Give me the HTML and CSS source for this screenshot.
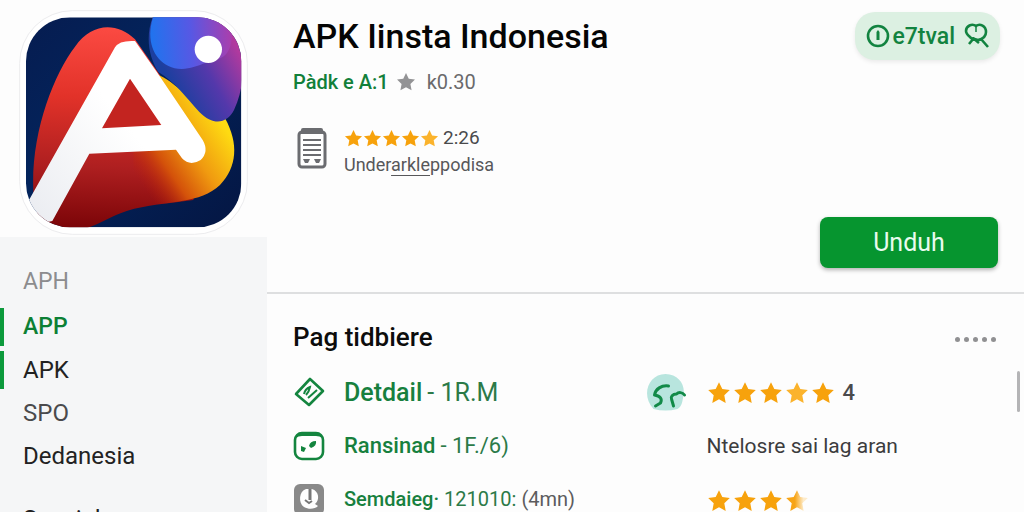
FILE: index.html
```html
<!DOCTYPE html>
<html lang="id">
<head>
  <meta charset="UTF-8">
  <meta name="viewport" content="width=device-width, initial-scale=1.0">
  <title>APK Iinsta Indonesia</title>
  <link rel="stylesheet" href="styles.css">
</head>
<body>
  <!-- Shared shapes -->
  <svg class="defs" aria-hidden="true">
    <defs>
      <linearGradient id="half">
        <stop offset="0.4" stop-color="#f7a416"/>
        <stop offset="0.8" stop-color="#fdebca"/>
      </linearGradient>
      <symbol id="star" viewBox="0 0 24 24">
        <path d="M12 1.2l3.3 6.9 7.5 1-5.5 5.2 1.4 7.6L12 18.2l-6.7 3.7 1.4-7.6L1.2 9.1l7.5-1z"/>
      </symbol>
    </defs>
  </svg>

  <div class="page">
    <aside class="side">
      <div class="logo">
        <svg viewBox="57 30 687 675" role="img" aria-label="APK Iinsta">
          <defs>
            <linearGradient id="navy" x1="0" y1="0" x2="1" y2="1">
              <stop offset="0" stop-color="#061c50"/>
              <stop offset="0.4" stop-color="#03245c"/>
              <stop offset="1" stop-color="#041643"/>
            </linearGradient>
            <linearGradient id="red" gradientUnits="userSpaceOnUse" x1="260" y1="80" x2="240" y2="680">
              <stop offset="0" stop-color="#fb4a42"/>
              <stop offset="0.35" stop-color="#e23229"/>
              <stop offset="0.7" stop-color="#ae1f20"/>
              <stop offset="1" stop-color="#7c0508"/>
            </linearGradient>
            <linearGradient id="gold" gradientUnits="userSpaceOnUse" x1="430" y1="560" x2="680" y2="390">
              <stop offset="0" stop-color="#b81c08" stop-opacity="0"/>
              <stop offset="0.3" stop-color="#d4520a"/>
              <stop offset="0.6" stop-color="#f09a10"/>
              <stop offset="1" stop-color="#fedb12"/>
            </linearGradient>
            <linearGradient id="violet" gradientUnits="userSpaceOnUse" x1="520" y1="260" x2="715" y2="150">
              <stop offset="0" stop-color="#1c3f9f"/>
              <stop offset="0.5" stop-color="#5438ab"/>
              <stop offset="1" stop-color="#b23a9e"/>
            </linearGradient>
            <linearGradient id="sky" gradientUnits="userSpaceOnUse" x1="455" y1="110" x2="690" y2="90">
              <stop offset="0" stop-color="#2173ee"/>
              <stop offset="0.5" stop-color="#5758e4"/>
              <stop offset="1" stop-color="#a83fae"/>
            </linearGradient>
            <linearGradient id="letter" x1="0.6" y1="0.5" x2="0" y2="1">
              <stop offset="0" stop-color="#fff"/>
              <stop offset="1" stop-color="#e9ebf0"/>
            </linearGradient>
            <clipPath id="tile"><rect x="78" y="52" width="646" height="630" rx="132"/></clipPath>
          </defs>
          <rect x="59" y="32" width="683" height="671" rx="158" fill="#fff" stroke="#ececee" stroke-width="3"/>
          <g clip-path="url(#tile)">
            <rect x="78" y="52" width="646" height="630" fill="url(#navy)"/>
            <path fill="url(#red)" d="M100 575C92 400 160 225 225 140C275 68 350 65 405 118L480 226L600 500L580 600C500 612 440 614 380 633C330 650 300 672 250 688H120z"/>
            <path fill="url(#gold)" d="M400 450H500L478 226C540 255 590 330 676 356C716 430 712 500 660 555C600 612 510 600 400 628z"/>
            <path fill="#c32420" d="M390 226L296 395H494z"/>
            <path fill="url(#violet)" d="M458 52C436 110 446 170 475 216C525 245 560 295 598 336C640 378 680 372 702 330C716 300 724 270 726 240V50z"/>
            <path fill="url(#sky)" d="M460 50C432 130 470 205 545 207C600 204 622 180 660 175C690 165 705 120 690 50z"/>
            <path fill="url(#letter)" fill-rule="evenodd" d="M345 142Q358 120 405 123L470 215L608 420Q628 455 602 480Q570 500 546 475L528 449L268 461L157 663L80 680V610L90 595zM390 236L306 385L484 375z"/>
            <circle cx="625" cy="148" r="41" fill="#fff"/>
          </g>
        </svg>
      </div>
      <nav class="menu">
        <h2>APH</h2>
        <a class="active" href="#app">APP</a>
        <a class="marked" href="#apk">APK</a>
        <a class="muted" href="#spo">SPO</a>
        <a href="#dedanesia">Dedanesia</a>
        <a class="next" href="#spesial">Spesial</a>
      </nav>
    </aside>

    <main class="main">
      <header class="app">
        <div class="app-info">
          <h1>APK Iinsta Indonesia</h1>
          <p class="author">
            <a href="#author">Pàdk e A:1</a>
            <svg class="star grey"><use href="#star"/></svg>
            <span>k0.30</span>
          </p>
          <div class="rating">
            <svg class="doc" viewBox="0 0 30 42" aria-hidden="true">
              <rect x="2" y="5" width="26" height="35" rx="3" fill="#fff" stroke="#6b6c70" stroke-width="3"/>
              <path fill="#6b6c70" d="M4 7V3q0-2 2-2h18q2 0 2 2v4z"/>
              <path stroke="#6b6c70" stroke-width="2" d="M6 13h18M6 18h18M6 23h18M6 28h18"/>
              <path fill="#6b6c70" d="M6 32h7l-2 4H8zM17 32h7l-2 4h-3z"/>
            </svg>
            <div>
              <div class="stars small">
                <svg class="star"><use href="#star"/></svg>
                <svg class="star"><use href="#star"/></svg>
                <svg class="star"><use href="#star"/></svg>
                <svg class="star"><use href="#star"/></svg>
                <svg class="star light"><use href="#star"/></svg>
                <span>2:26</span>
              </div>
              <p class="note">Under<u>arkle</u>ppodisa</p>
            </div>
          </div>
        </div>
        <div class="app-actions">
          <button class="chip" type="button">
            <svg class="chip-mark" viewBox="0 0 24 24" aria-hidden="true">
              <circle cx="12" cy="12" r="10" fill="none" stroke="#128340" stroke-width="2.6"/>
              <path fill="#128340" d="M10.500 8l1.500-2 1.500 2v8h-3z"/>
            </svg>
            <span>e7tval</span>
            <svg class="chip-search" viewBox="0 0 26 26" fill="none" stroke="#128340" stroke-width="2.600" aria-hidden="true">
              <path d="M13 3C9 0 3 3 3 8c0 3 3 5 5 7l7 2c5-1 8-4 8-8 0-6-6-9-10-6zM18 16l7 8M6 21l5-6M10 15l6 5"/>
              <path stroke-width="1.500" d="M13 3v6"/>
            </svg>
          </button>
          <button class="download" type="button">Unduh</button>
        </div>
      </header>

      <section class="details">
        <div class="details-head">
          <h2>Pag tidbiere</h2>
          <button class="more" type="button" aria-label="Lainnya"><i></i><i></i><i></i><i></i><i></i></button>
        </div>
        <div class="columns">
          <ul class="list">
            <li class="big">
              <svg viewBox="0 0 32 32" fill="none" stroke="#14853f" aria-hidden="true">
                <path stroke-width="2.6" stroke-linejoin="round" d="M17 2l13 12-14 14L3 17z"/>
                <path stroke-width="2" d="M11 17q1-5 6-7-1 5-4 8M15 21l9-8"/>
              </svg>
              <a href="#detdail">Detdail</a><span>- 1R.M</span>
            </li>
            <li>
              <svg viewBox="0 0 32 32" aria-hidden="true">
                <rect x="2" y="3" width="28" height="26" rx="7" fill="#fff" stroke="#14853f" stroke-width="2.6"/>
                <path fill="#14853f" d="M3 8q2-6 7-6h12q5 0 7 6-2-2-6-2H9q-4 0-6 2z"/>
                <path fill="#14853f" d="M8 16l5 2-2 4-3-1zM16 16q1-5 7-5 1 5-5 7z"/>
              </svg>
              <a href="#ransinad">Ransinad</a><span>- 1F./6)</span>
            </li>
            <li class="small">
              <svg viewBox="0 0 32 32" aria-hidden="true">
                <rect x="1" y="1" width="30" height="31" rx="6" fill="#898989"/>
                <path fill="#fff" d="M13 6C6 8 5 20 11 24c5 3 11 2 14-1l-3-2c5-4 4-13-3-15z"/>
                <path stroke="#777" stroke-width="3" fill="none" d="M17 6v11"/>
                <path stroke="#777" stroke-width="2" fill="none" d="M12 17l4 3 3-2"/>
              </svg>
              <a href="#semdaieg">Semdaieg·</a><span>121010:</span><small>(4mn)</small>
            </li>
          </ul>
          <div class="review">
            <svg class="avatar" viewBox="0 0 40 38" aria-hidden="true">
              <path fill="#b8e5de" d="M7 36C-6 22 2 1 19 1c13 0 20 11 18 21-1 7-2 12-6 14-8 2-16 2-24 0z"/>
              <path fill="none" stroke="#128a48" stroke-width="3" stroke-linecap="round" stroke-linejoin="round" d="M22 13c-7-1-13 3-14 9 6 1 8 4 6 8l-5 3M38 22c-2-3-6-3-8-1-4 0-6 3-5 5l2 7"/>
            </svg>
            <div class="review-body">
              <div class="stars">
                <svg class="star"><use href="#star"/></svg>
                <svg class="star"><use href="#star"/></svg>
                <svg class="star"><use href="#star"/></svg>
                <svg class="star light"><use href="#star"/></svg>
                <svg class="star"><use href="#star"/></svg>
                <b>4</b>
              </div>
              <p>Ntelosre sai lag aran</p>
              <div class="stars">
                <svg class="star"><use href="#star"/></svg>
                <svg class="star"><use href="#star"/></svg>
                <svg class="star"><use href="#star"/></svg>
                <svg class="star half"><use href="#star"/></svg>
              </div>
            </div>
          </div>
        </div>
      </section>
    </main>
    <div class="scroll-thumb"></div>
  </div>
</body>
</html>
```

FILE: styles.css
```css
/* Base styles */
* {
  box-sizing: border-box;
}
body {
  margin: 0;
  font-family: Roboto, "Liberation Sans", sans-serif;
  background-color: #fdfdfd;
  color: #222;
}
h1, h2, p, ul {
  margin: 0;
  padding: 0;
}
a {
  color: inherit;
  text-decoration: none;
}
button {
  border: none;
  font-family: inherit;
  cursor: pointer;
}
svg {
  display: block;
  flex: none;
}
.defs {
  position: absolute;
  width: 0;
  height: 0;
}
.page {
  position: relative;
  display: grid;
  grid-template-columns: 267px 1fr;
  height: 100vh;
  overflow: hidden;
}

/* Sidebar */
.side {
  display: flex;
  flex-direction: column;
}
.logo {
  padding: 10px 19px 2px;
}
.logo svg {
  width: 100%;
}
.menu {
  flex: 1;
  display: flex;
  flex-direction: column;
  gap: 5px;
  padding-top: 26px;
  background-color: #f5f6f7;
  font-size: 24px;
  line-height: 38px;
}
.menu h2 {
  padding-left: 23px;
  margin-bottom: 2px;
  font-size: 23px;
  font-weight: 400;
  color: #8c8c8e;
}
.menu a {
  padding-left: 19px;
  border-left: 4px solid transparent;
}
.menu .active {
  border-color: #0c9a3c;
  color: #0c8034;
  font-size: 23px;
  font-weight: 500;
}
.menu .marked {
  border-color: #0c9a3c;
}
.menu .muted {
  color: #4a4a4c;
}
.menu .next {
  margin-top: 20px;
}

/* App header */
.app {
  display: flex;
  justify-content: space-between;
  height: 294px;
  padding: 12px 26px 24px;
  border-bottom: 2px solid #dedfe0;
}
.app h1 {
  font-size: 34px;
  line-height: 48px;
  font-weight: 500;
  color: #050505;
}
.author {
  display: flex;
  align-items: center;
  gap: 7px;
  margin-top: 6px;
  font-size: 20px;
  line-height: 32px;
  color: #6a6a6c;
}
.author a {
  color: #12803a;
  font-weight: 500;
}
.author span {
  margin-left: 4px;
}
.star {
  width: 24px;
  height: 24px;
  fill: #f7a20c;
}
.star.grey {
  width: 20px;
  height: 20px;
  fill: #939395;
}
.star.light {
  fill: #fbb32c;
}
.star.half {
  fill: url(#half);
}
.rating {
  display: flex;
  gap: 17px;
  margin-top: 28px;
  padding-left: 4px;
}
.doc {
  width: 30px;
  height: 42px;
  margin-top: 1px;
}
.stars {
  display: flex;
  align-items: center;
  gap: 2px;
}
.stars.small {
  font-size: 19px;
  line-height: 24px;
  color: #4a4a4c;
  gap: 0;
}
.stars.small .star {
  width: 19px;
  height: 19px;
}
.stars.small span {
  margin-left: 4px;
}
.note {
  margin-top: 2px;
  font-size: 18px;
  line-height: 26px;
  color: #57575a;
}
.note u {
  text-decoration-thickness: 1px;
  text-underline-offset: 4px;
}
.app-actions {
  display: flex;
  flex-direction: column;
  justify-content: space-between;
  align-items: flex-end;
}
.chip {
  display: flex;
  align-items: center;
  gap: 2px;
  height: 48px;
  margin-right: -2px;
  padding: 0 11px;
  border-radius: 20px;
  background-color: #dcf0e2;
  box-shadow: 0 2px 4px rgba(0, 0, 0, 0.08);
  color: #128340;
  font-size: 23px;
  font-weight: 500;
}
.chip-mark {
  width: 24px;
  height: 24px;
}
.chip-search {
  width: 26px;
  height: 26px;
  margin-left: 6px;
}
.download {
  width: 178px;
  height: 51px;
  border-radius: 8px;
  background-color: #06952f;
  box-shadow: 0 2px 4px rgba(0, 0, 0, 0.3);
  color: #e9fbee;
  font-size: 25px;
}

/* Details */
.details {
  padding: 24px 26px 0;
}
.details-head {
  display: flex;
  justify-content: space-between;
  align-items: center;
}
.details-head h2 {
  font-size: 26px;
  line-height: 38px;
  font-weight: 500;
  color: #0c0c0c;
}
.more {
  display: flex;
  gap: 4px;
  padding: 4px 2px 0;
  background: none;
}
.more i {
  width: 5px;
  height: 5px;
  border-radius: 50%;
  background-color: #909092;
}
.columns {
  display: grid;
  grid-template-columns: 1fr 1fr;
  margin-top: 10px;
}
.list {
  list-style: none;
}
.list li {
  display: flex;
  align-items: center;
  gap: 5px;
  height: 53px;
  font-size: 22px;
  color: #2c7a48;
  white-space: nowrap;
}
.list .big {
  font-size: 25px;
}
.list .small {
  font-size: 20px;
}
.list svg {
  width: 32px;
  height: 32px;
  margin-right: 14px;
}
.list a {
  color: #17803e;
  font-weight: 500;
}
.list small {
  font-size: 20px;
  color: #5c5c5e;
}
.review {
  display: flex;
  gap: 20px;
}
.avatar {
  width: 41px;
  height: 38px;
  margin-top: 7px;
}
.review-body .stars {
  height: 53px;
}
.review-body b {
  margin-left: 6px;
  font-size: 22px;
  font-weight: 500;
  color: #4a4a4c;
}
.review-body p {
  font-size: 21px;
  line-height: 55px;
  color: #3c3c3e;
  white-space: nowrap;
}

.scroll-thumb {
  position: absolute;
  top: 371px;
  right: 4px;
  width: 3px;
  height: 41px;
  border-radius: 2px;
  background-color: #b4b4b6;
}
```
